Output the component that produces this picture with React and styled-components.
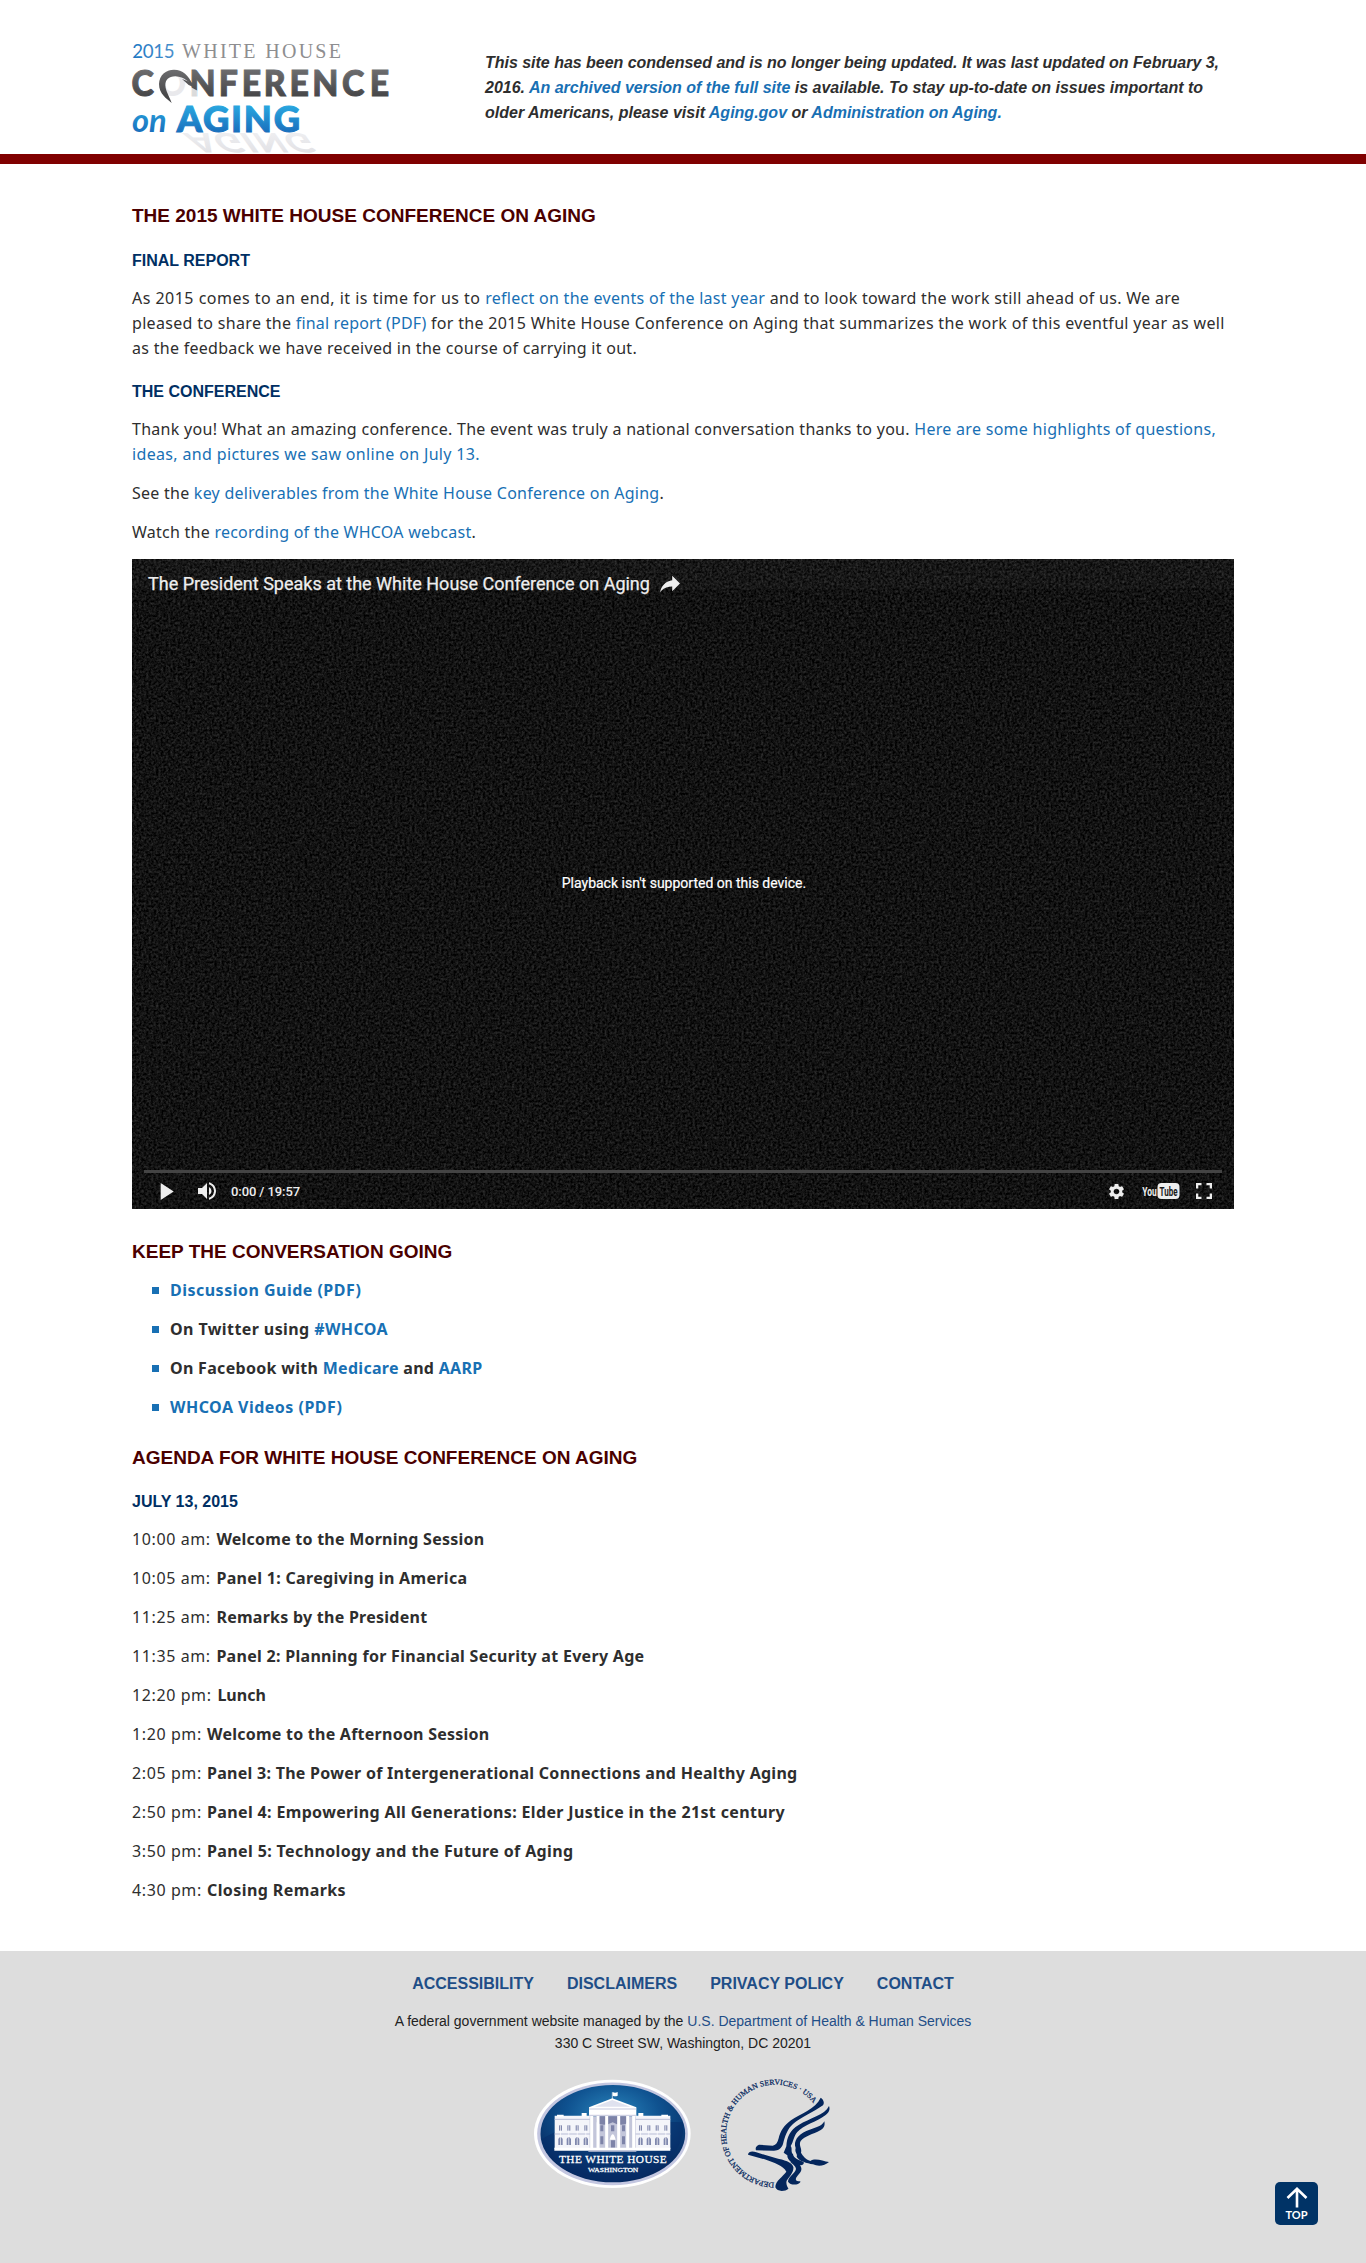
import React from "react";
import styled, { createGlobalStyle } from "styled-components";
import { MdSettings, MdVolumeUp } from "react-icons/md";

const sans = '"Liberation Sans", Arial, sans-serif';
const humanist = '"Noto Sans", "Open Sans", sans-serif';

const GlobalStyle = createGlobalStyle`
  * { box-sizing: border-box; }
  body { margin: 0; background: #fff; color: #2e2e2e; font: 16px/25px ${humanist}; }
  h2, h3, p, ul { margin: 0; padding: 0; }
`;

const Page = styled.div`
  position: relative;
  display: flex;
  flex-direction: column;
  height: 2263px;
  overflow: hidden;
`;
const Header = styled.header`
  display: flex;
  height: 164px;
  padding: 20px 120px 0;
  border-bottom: 10px solid #800000;
`;
const Logo = styled.svg`
  flex: none;
  width: 300px;
  height: 134px;
`;
const Notice = styled.p`
  && { margin: 30px 0 0 65px; }
  font: italic bold 16px/25px ${sans};
  white-space: nowrap;
`;
const Link = styled.a`
  color: #1870b4;
  text-decoration: none;
  cursor: pointer;
`;
const Content = styled.main`
  display: flex;
  flex-direction: column;
  width: 1102px;
  height: 1787px;
  margin: 0 auto;
  padding-top: 39px;
`;
const Title = styled.h2`
  font: bold 19px/25px ${sans};
  color: #4b0000;
  white-space: nowrap;
  && { margin-top: ${(p) => p.$gap || 0}px; }
`;
const Subtitle = styled.h3`
  font: bold 16px/25px ${sans};
  color: #002f63;
  && { margin-top: ${(p) => p.$gap}px; }
`;
const Paragraph = styled.p`
  && { margin-top: ${(p) => p.$gap || 14}px; }
`;
const Line = styled.span`
  display: block;
  white-space: nowrap;
  letter-spacing: ${(p) => p.$track || 0}px;
`;
const Run = styled.span`
  letter-spacing: ${(p) => p.$track}px;
`;
const Player = styled.section`
  position: relative;
  isolation: isolate;
  display: flex;
  flex-direction: column;
  flex: none;
  height: 650px;
  margin-top: 14px;
  background: #121212;
  color: #eee;
  font-family: Roboto, sans-serif;
`;
const Grain = styled.svg`
  position: absolute;
  inset: 0;
  width: 100%;
  height: 100%;
  z-index: -1;
`;
const PlayerTop = styled.div`
  display: flex;
  align-items: center;
  gap: 10.5px;
  height: 50px;
  padding: 0 0 2px 16px;
  font-size: 18px;
  -webkit-text-stroke: 0.25px #eee;
`;
const PlayerMessage = styled.div`
  display: flex;
  flex: 1;
  align-items: center;
  justify-content: center;
  padding: 0 0 12px 2px;
  font-size: 14px;
  -webkit-text-stroke: 0.2px #fff;
  color: #fff;
`;
const Progress = styled.div`
  height: 3px;
  margin: 0 12px;
  background: #444;
`;
const Controls = styled.div`
  display: flex;
  align-items: center;
  height: 36px;
  padding: 0 22px 0 28px;
`;
const Time = styled.span`
  margin-left: 12px;
  font-size: 13px;
  font-weight: 500;
  letter-spacing: -0.09px;
`;
const ControlGroup = styled.div`
  display: flex;
  align-items: center;
  gap: ${(p) => p.$gap}px;
  ${(p) => p.$end && "margin-left: auto;"}
`;
const Icon = styled.svg`
  display: block;
  flex: none;
  width: ${(p) => p.$w}px;
  height: ${(p) => p.$h}px;
`;
const BulletList = styled.ul`
  display: flex;
  flex-direction: column;
  gap: 14px;
  list-style: none;
  font-weight: bold;
  && { margin-top: 14px; padding-left: 20px; }
`;
const BulletItem = styled.li`
  display: flex;
  gap: 11px;
  &::before {
    content: "";
    width: 7px;
    height: 7px;
    margin-top: 9px;
    background: #1870b4;
  }
`;
const Agenda = styled.ul`
  display: flex;
  flex-direction: column;
  gap: 14px;
  list-style: none;
  && { margin-top: 13px; }
`;
const AgendaItem = styled.li`
  display: flex;
  white-space: pre;
`;
const AgendaTime = styled.span`
  width: ${(p) => p.$w}px;
  letter-spacing: 0.6px;
`;
const AgendaTitle = styled.strong`
  letter-spacing: ${(p) => p.$track}px;
`;
const Footer = styled.footer`
  display: flex;
  flex-direction: column;
  align-items: center;
  flex: 1;
  padding-top: 20px;
  background: #ddd;
  color: #222;
  font-family: ${sans};
`;
const FooterNav = styled.nav`
  display: flex;
  gap: 33px;
  font-weight: bold;
`;
const FooterLink = styled.a`
  color: #1f4e87;
  cursor: pointer;
`;
const Address = styled.p`
  && { margin-top: 14.2px; }
  font-size: 14px;
  line-height: 22px;
  text-align: center;
`;
const Seals = styled.div`
  display: flex;
  align-items: center;
  gap: 26px;
  margin-top: 22.500px;
`;
const TopButton = styled.a`
  position: absolute;
  right: 48px;
  bottom: 38px;
  display: flex;
  flex-direction: column;
  align-items: center;
  width: 43px;
  height: 43px;
  padding-top: 5px;
  border-radius: 5px;
  background: #003366;
  color: #fff;
  font: bold 11px/14px Lato, sans-serif;
`;

const agenda = [
  ["10:00 am:", 84.4, "Welcome to the Morning Session", 0.236],
  ["10:05 am:", 84.4, "Panel 1: Caregiving in America", 0.324],
  ["11:25 am:", 84.4, "Remarks by the President", 0.258],
  ["11:35 am:", 84.4, "Panel 2: Planning for Financial Security at Every Age", 0.293],
  ["12:20 pm:", 85.4, "Lunch", 0.02],
  ["1:20 pm:", 75, "Welcome to the Afternoon Session", 0.244],
  ["2:05 pm:", 75, "Panel 3: The Power of Intergenerational Connections and Healthy Aging", 0.274],
  ["2:50 pm:", 75, "Panel 4: Empowering All Generations: Elder Justice in the 21st century", 0.352],
  ["3:50 pm:", 75, "Panel 5: Technology and the Future of Aging", 0.376],
  ["4:30 pm:", 75, "Closing Remarks", 0.408],
];

const SiteLogo = () => (
  <Logo viewBox="0 0 900 402">
    <defs>
      <linearGradient id="grey" gradientUnits="userSpaceOnUse" x1="0" y1="150" x2="0" y2="232">
        <stop offset="0" stopColor="#6c6c6e" />
        <stop offset="1" stopColor="#454547" />
      </linearGradient>
      <linearGradient id="aging" gradientUnits="userSpaceOnUse" x1="0" y1="258" x2="0" y2="336">
        <stop offset="0" stopColor="#29a6df" />
        <stop offset="1" stopColor="#1a70bd" />
      </linearGradient>
      <linearGradient id="year" x1="0" x2="1">
        <stop offset="0" stopColor="#1f78c4" />
        <stop offset="1" stopColor="#4a90cc" />
      </linearGradient>
      <linearGradient id="shade" gradientUnits="userSpaceOnUse" x1="0" y1="336" x2="0" y2="258">
        <stop offset="0" stopColor="#eeeef0" />
        <stop offset="1" stopColor="#e2e2e6" />
      </linearGradient>
    </defs>
    <text x="186" y="336" transform="matrix(1 0 -.52 -.74 175.8 588)" fontFamily="Lato, sans-serif" fontWeight="900" fontSize="109" textLength="370" fill="url(#shade)" aria-hidden="true">AGING</text>
    <text x="37" y="113" fontFamily="Lato, sans-serif" fontSize="56" textLength="127" fill="url(#year)">2015</text>
    <text x="186" y="113" fontFamily="Liberation Serif, serif" fontSize="60" textLength="477" fill="#8e8e90">WHITE HOUSE</text>
    <text
      y="229"
      x="37.4 124.7 224.3 318.9 393.1 464.1 546.9 620 715.9 806"
      transform="scale(.93 1)"
      fontFamily="Lato, sans-serif"
      fontWeight="900"
      fontSize="109"
      fill="url(#grey)"
      stroke="url(#grey)"
      strokeWidth="3"
    >
      C<tspan fill="#e9e9ec" stroke="none">O</tspan>NFERENCE
    </text>
    <path d="M204 197L233 212V233H204Z" fill="#fff" opacity=".8" />
    <path d="M155 249C140 236 117 222 117 192C118 165 138 149 162 149C188 149 206 166 218 194C204 189 196 170 166 169C146 169 136 180 136 196C137 214 147 227 155 249Z" fill="url(#grey)" />
    <path d="M186 177L218 189L224 203L206 195Z" fill="#58585a" />
    <text x="36" y="335" fontFamily="Lato, sans-serif" fontWeight="700" fontStyle="italic" fontSize="100" textLength="104" lengthAdjust="spacingAndGlyphs" fill="url(#aging)">on</text>
    <text x="170" y="336" fontFamily="Lato, sans-serif" fontWeight="900" fontSize="109" textLength="370" fill="url(#aging)" stroke="url(#aging)" strokeWidth="3">AGING</text>
  </Logo>
);

const Wing = ({ x }) => (
  <g>
    <path d={`M${x} 150H${x + 107}V250H${x}Z`} fill="#f4f5fa" />
    <path d={`M${x} 161H${x + 107}M${x} 205H${x + 107}`} stroke="#b9bdd6" strokeWidth="3" />
    {[13, 38, 63, 89].map((d) => (
      <g key={d} fill="#8088ae">
        <rect x={x + d} y="179" width="9" height="16" />
        <path d={`M${x + d - 2} 238V220Q${x + d + 4.5} 208 ${x + d + 11} 220V238Z`} />
        <rect x={x + d + 3.5} y="179" width="2" height="60" fill="#fff" />
      </g>
    ))}
  </g>
);

const WhiteHouseSeal = () => (
  <Icon $w={159} $h={110} viewBox="40 40 477 330">
    <defs>
      <radialGradient id="sky" cx=".5" cy=".3" r=".65">
        <stop offset="0" stopColor="#2b86bd" />
        <stop offset=".5" stopColor="#0f5290" />
        <stop offset="1" stopColor="#062a60" />
      </radialGradient>
    </defs>
    <ellipse cx="278" cy="204.500" rx="235" ry="162.500" fill="#fff" />
    <ellipse cx="278.500" cy="204.500" rx="226" ry="154" fill="#c3c6e0" />
    <ellipse cx="279.500" cy="204" rx="217" ry="146" fill="url(#sky)" />
    <path d="M66 222C150 160 300 165 490 170C500 250 420 347 279 348C170 348 80 290 66 222Z" fill="#052c68" opacity=".5" />
    <Wing x={105} />
    <Wing x={345} />
    <path d="M186 142h15v10h-15zM356 142h15v10h-15zM112 147h20v6h-20zM425 147h20v6h-20z" fill="#fff" />
    <path d="M208 125L278 98L350 125V152H208Z" fill="#fff" />
    <path d="M225 123L278 103L332 123Z" fill="#dfe2ef" />
    <path d="M208 130H350M208 149H350" stroke="#b9bdd6" strokeWidth="2.500" />
    <rect x="210" y="152" width="138" height="100" fill="#c3c6da" />
    <path d="M231 152H327V170Q305 185 279 170Q250 185 231 170Z" fill="#7d83a8" />
    <path d="M242 179h9v18h-9zM274 179h10v18h-10zM307 179h9v18h-9zM242 212h9v24h-9zM307 212h9v24h-9zM274 224h12v22h-12z" fill="#7d83a8" />
    <path d="M216 151V250M235 151V250M261 151V250M297 151V250M324 151V250M342 151V250" stroke="#fff" strokeWidth="9" />
    <path d="M270 222Q279 190 288 222Z" fill="#fff" />
    <path d="M104 246H452V255H104Z" fill="#fff" />
    <path d="M206 256H350" stroke="#c3c6da" strokeWidth="4" />
    <path d="M278 100V80" stroke="#fff" strokeWidth="2" />
    <path d="M279 79Q286 83 294 79V90Q286 93 279 90Z" fill="#fff" />
    <g fill="#fff" fontFamily="Liberation Serif, serif">
      <text x="118" y="291" fontSize="34" stroke="#fff" strokeWidth=".8" textLength="323">THE WHITE HOUSE</text>
      <text x="205" y="318" fontSize="21" stroke="#fff" strokeWidth=".8" textLength="151" lengthAdjust="spacingAndGlyphs">WASHINGTON</text>
    </g>
  </Icon>
);

const HhsLogo = () => (
  <Icon $w={115} $h={115} viewBox="595 35 345 345" fill="#04265c">
    <defs>
      <path id="ring" d="M764 352A147 147 0 1 1 892 129" />
    </defs>
    <text fontFamily="Liberation Serif, serif" fontSize="23" stroke="#04265c" strokeWidth=".7">
      <textPath href="#ring" textLength="592" lengthAdjust="spacingAndGlyphs">DEPARTMENT OF HEALTH &amp; HUMAN SERVICES · USA</textPath>
    </text>
    <path d="M903 97C912 103 915 112 910 120C880 141 843 156 820 176C803 191 796 212 790 236C786 249 776 256 763 256L709 255C706 248 710 241 718 238L759 241C770 240 774 230 777 219C782 198 793 180 814 165C840 146 888 131 903 97Z" />
    <path d="M928 122C932 132 928 142 918 149C890 170 850 180 833 200C822 212 822 228 813 242C819 250 812 258 820 267C822 280 838 284 852 290C855 298 845 302 835 298C818 296 802 284 803 270L792 262L800 243C802 215 810 195 837 179C870 158 915 150 928 122Z" />
    <path d="M914 168C917 181 912 190 902 195C880 207 855 212 843 227C836 240 848 250 844 262C850 272 857 281 872 287C886 276 910 287 928 290C915 302 895 304 880 297C862 293 838 288 831 274C835 266 824 262 828 248C820 228 835 208 860 197C880 189 907 184 914 168Z" />
    <path d="M685 268C686 258 698 256 710 261L770 279C792 284 817 290 821 305C823 320 809 334 801 346C797 359 808 370 806 370C796 379 772 380 767 366C767 346 790 334 800 319C792 302 762 292 735 282Z" />
    <path d="M812 290C832 291 848 299 845 314C841 328 826 334 829 345C833 350 840 347 843 349C835 361 812 360 805 349C805 335 826 325 829 311C828 301 818 297 812 290Z" />
  </Icon>
);

export default function App() {
  return (
    <Page>
      <GlobalStyle />
      <Header>
        <SiteLogo />
        <Notice>
          <Line $track={-0.022}>This site has been condensed and is no longer being updated. It was last updated on February 3,</Line>
          <Line>2016. <Link>An archived version of the full site</Link> is available. To stay up-to-date on issues important to</Line>
          <Line>older Americans, please visit <Link>Aging.gov</Link> or <Link>Administration on Aging.</Link></Line>
        </Notice>
      </Header>
      <Content>
        <Title>THE 2015 WHITE HOUSE CONFERENCE ON AGING</Title>
        <Subtitle $gap={20}>FINAL REPORT</Subtitle>
        <Paragraph $gap={13}>
          <Line $track={0.305}><Run $track={0.477}>As 2015 comes to an end, it is time for us to </Run><Link><Run $track={0.287}>reflect on the events of the last year</Run></Link> and to look toward the work still ahead of us. We are</Line>
          <Line $track={0.32}>pleased to share the <Link><Run $track={0.16}>final report (PDF)</Run></Link> for the 2015 White House Conference on Aging that summarizes the work of this eventful year as well</Line>
          <Line $track={0.283}>as the feedback we have received in the course of carrying it out.</Line>
        </Paragraph>
        <Subtitle $gap={18}>THE CONFERENCE</Subtitle>
        <Paragraph $gap={13}>
          <Line $track={0.286}>Thank you! What an amazing conference. The event was truly a national conversation thanks to you. <Link>Here are some highlights of questions,</Link></Line>
          <Line $track={0.345}><Link>ideas, and pictures we saw online on July 13.</Link></Line>
        </Paragraph>
        <Paragraph><Line $track={0.249}>See the <Link>key deliverables from the White House Conference on Aging</Link>.</Line></Paragraph>
        <Paragraph><Line $track={0.248}>Watch the <Link>recording of the WHCOA webcast</Link>.</Line></Paragraph>
        <Player>
          <Grain>
            <filter id="grain" x="0" y="0" width="100%" height="100%" colorInterpolationFilters="sRGB">
              <feTurbulence type="fractalNoise" baseFrequency=".41" numOctaves="3" seed="4" />
              <feColorMatrix values=".3 0 0 0 -.078  .3 0 0 0 -.078  .3 0 0 0 -.078  0 0 0 0 1" />
            </filter>
            <rect width="100%" height="100%" filter="url(#grain)" />
            <rect width="100%" height="30" fill="#fff" opacity=".025" />
          </Grain>
          <PlayerTop>
            The President Speaks at the White House Conference on Aging
            <Icon $w={20} $h={18} viewBox="8 8 20 18" fill="#eee">
              <path d="m20.2 14.190 0-4.450 7.790 7.790-7.790 7.620 0-4.560C16.270 20.690 12.100 21.810 9.340 24.760 8.800 25.130 7.600 27.290 8.120 25.650 9.080 21.320 11.800 17.180 15.980 15.380c1.330-.6 2.760-.98 4.210-1.190z" />
            </Icon>
          </PlayerTop>
          <PlayerMessage>Playback isn't supported on this device.</PlayerMessage>
          <Progress />
          <Controls>
            <ControlGroup $gap={21}>
              <Icon $w={14} $h={17} viewBox="0 0 14 17" fill="#eee"><path d="M.7 0L13.700 8.500L.7 17Z" /></Icon>
              <MdVolumeUp size={24} color="#eee" />
            </ControlGroup>
            <Time>0:00 / 19:57</Time>
            <ControlGroup $gap={16} $end>
              <MdSettings size={19} color="#eee" />
              <Icon $w={38} $h={18} viewBox="0 0 38 18">
                <rect x="15.500" y="1" width="22" height="16" rx="4" fill="#eee" />
                <g fontFamily="Roboto, sans-serif" fontWeight="700" fontSize="13.500">
                  <text x=".3" y="13.800" textLength="14.500" lengthAdjust="spacingAndGlyphs" fill="#eee">You</text>
                  <text x="17.500" y="13.800" textLength="18" lengthAdjust="spacingAndGlyphs" fill="#1a1a1a">Tube</text>
                </g>
              </Icon>
              <Icon $w={16} $h={16} viewBox="0 0 16 16" fill="none" stroke="#eee" strokeWidth="2.300">
                <path d="M1.150 5.500V1.150H5.500M10.500 1.150H14.850V5.500M14.850 10.500V14.850H10.500M5.500 14.850H1.150V10.500" />
              </Icon>
            </ControlGroup>
          </Controls>
        </Player>
        <Title $gap={30}>KEEP THE CONVERSATION GOING</Title>
        <BulletList>
          <BulletItem><Line $track={0.487}><Link>Discussion Guide (PDF)</Link></Line></BulletItem>
          <BulletItem><Line $track={0.406}>On Twitter using <Link>#WHCOA</Link></Line></BulletItem>
          <BulletItem><Line $track={0.299}>On Facebook with <Link>Medicare</Link> and <Link>AARP</Link></Line></BulletItem>
          <BulletItem><Line $track={0.479}><Link>WHCOA Videos (PDF)</Link></Line></BulletItem>
        </BulletList>
        <Title $gap={25}>AGENDA FOR WHITE HOUSE CONFERENCE ON AGING</Title>
        <Subtitle $gap={19}>JULY 13, 2015</Subtitle>
        <Agenda>
          {agenda.map(([time, width, title, track]) => (
            <AgendaItem key={time}>
              <AgendaTime $w={width}>{time}</AgendaTime>
              <AgendaTitle $track={track}>{title}</AgendaTitle>
            </AgendaItem>
          ))}
        </Agenda>
      </Content>
      <Footer>
        <FooterNav>
          <FooterLink>ACCESSIBILITY</FooterLink>
          <FooterLink>DISCLAIMERS</FooterLink>
          <FooterLink>PRIVACY POLICY</FooterLink>
          <FooterLink>CONTACT</FooterLink>
        </FooterNav>
        <Address>
          A federal government website managed by the <FooterLink>U.S. Department of Health &amp; Human Services</FooterLink>
          <br />
          330 C Street SW, Washington, DC 20201
        </Address>
        <Seals>
          <WhiteHouseSeal />
          <HhsLogo />
        </Seals>
      </Footer>
      <TopButton>
        <Icon $w={22} $h={21} viewBox="0 0 22 21" fill="none" stroke="#fff" strokeWidth="2.600">
          <path d="M11 20.500V2M1.500 11L11 1.800L20.500 11" />
        </Icon>
        TOP
      </TopButton>
    </Page>
  );
}
